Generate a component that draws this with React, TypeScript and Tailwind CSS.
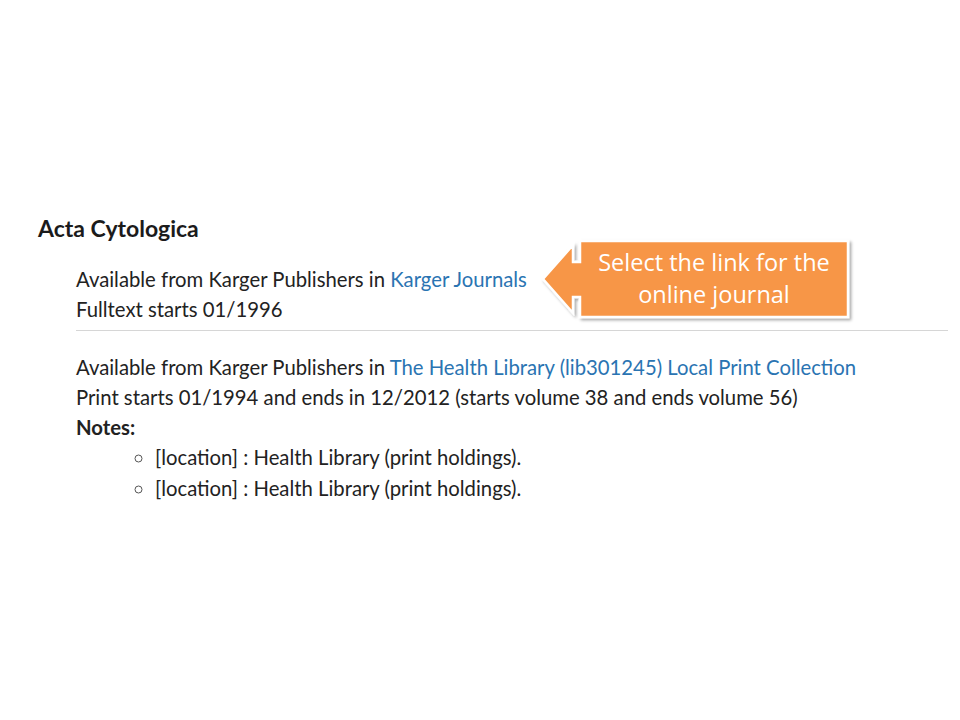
import React from 'react';

const holdings = [
  {
    provider: 'Karger Publishers',
    linkText: 'Karger Journals',
    coverage: 'Fulltext starts 01/1996',
    notes: [] as string[],
  },
  {
    provider: 'Karger Publishers',
    linkText: 'The Health Library (lib301245) Local Print Collection',
    coverage: 'Print starts 01/1994 and ends in 12/2012 (starts volume 38 and ends volume 56)',
    notes: ['[location] : Health Library (print holdings).', '[location] : Health Library (print holdings).'],
  },
];

function Callout() {
  return (
    <div className="absolute left-[536px] top-[234px] w-[324px] h-[92px]">
      <svg width="324" height="92" viewBox="536 234 324 92" className="absolute inset-0">
        <defs>
          <filter id="sh" x="-10%" y="-20%" width="130%" height="150%">
            <feDropShadow dx="2" dy="2" stdDeviation="1.6" floodColor="#000" floodOpacity="0.35" />
          </filter>
        </defs>
        <path
          d="M580 241 H848 V317 H580 V297 H573 V313 L543 279 L573 245 V262 H580 Z"
          fill="#F79646"
          stroke="#fff"
          strokeWidth="2.5"
          strokeLinejoin="miter"
          filter="url(#sh)"
        />
      </svg>
      <div className="absolute left-[44px] top-[6px] w-[268px] h-[76px] flex flex-col items-center justify-center text-white text-[23.5px] leading-[32px] font-['Open_Sans',sans-serif]">
        <span>Select the link for the</span>
        <span>online journal</span>
      </div>
    </div>
  );
}

export default function App() {
  return (
    <div className="relative w-[960px] h-[720px] bg-white font-['Lato',sans-serif] text-[#222]">
      <div className="pt-[211px] pl-[38px] pr-[12px]">
        <h2 className="text-[23px] leading-[34px] font-bold text-[#1b1b1b]">Acta Cytologica</h2>
        <div className="pl-[38px] mt-[19px]">
          {holdings.map((h, i) => (
            <div key={i} className={i > 0 ? 'border-t border-[#d6d6d6] pt-[21px]' : 'pb-[6px]'}>
              <div className="text-[20.3px] leading-[30px]">
                Available from {h.provider} in{' '}
                <a href="#" className="text-[#2a74b2]">
                  {h.linkText}
                </a>
              </div>
              <div className="text-[20.3px] leading-[30px]">{h.coverage}</div>
              {h.notes.length > 0 && (
                <>
                  <div className="text-[20.3px] leading-[30px] font-bold">Notes:</div>
                  <ul className="list-[circle] pl-[79px] text-[20.3px] leading-[31px] marker:text-[#555]">
                    {h.notes.map((n, j) => (
                      <li key={j}>{n}</li>
                    ))}
                  </ul>
                </>
              )}
            </div>
          ))}
        </div>
      </div>
      <Callout />
    </div>
  );
}
